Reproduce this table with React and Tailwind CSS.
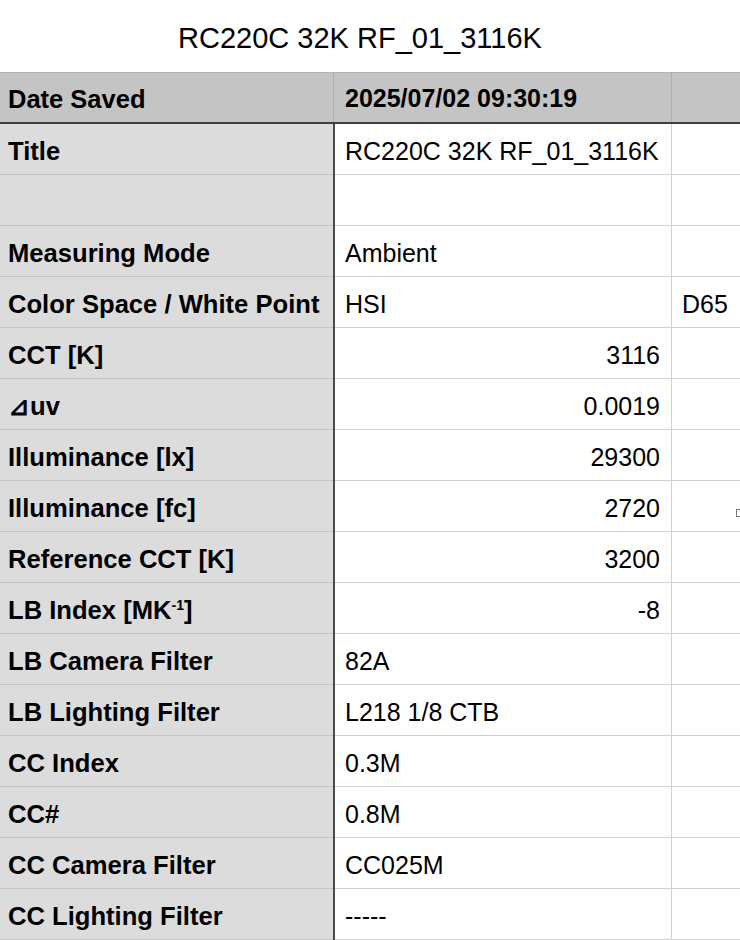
const rows = [
  { label: "Title", value: "RC220C 32K RF_01_3116K" },
  { label: "", value: "" },
  { label: "Measuring Mode", value: "Ambient" },
  { label: "Color Space / White Point", value: "HSI", extra: "D65" },
  { label: "CCT [K]", value: "3116", right: true },
  { label: "⊿uv", value: "0.0019", right: true },
  { label: "Illuminance [lx]", value: "29300", right: true },
  { label: "Illuminance [fc]", value: "2720", right: true, mark: true },
  { label: "Reference CCT [K]", value: "3200", right: true },
  { label: "LB Index [MK-1]", value: "-8", right: true, sup: true },
  { label: "LB Camera Filter", value: "82A" },
  { label: "LB Lighting Filter", value: "L218 1/8 CTB" },
  { label: "CC Index", value: "0.3M" },
  { label: "CC#", value: "0.8M" },
  { label: "CC Camera Filter", value: "CC025M" },
  { label: "CC Lighting Filter", value: "-----" },
];

function Label({ row }) {
  if (row.sup) {
    return (
      <span>
        LB Index [MK<sup className="text-[14px] relative -top-[9px]">-1</sup>]
      </span>
    );
  }
  return <span>{row.label}</span>;
}

export default function App() {
  return (
    <div
      className="w-[740px] h-[940px] overflow-hidden bg-white text-black"
      style={{ fontFamily: '"Liberation Sans", Arial, sans-serif' }}
    >
      <div className="h-[72px] flex items-center justify-center text-[29px] pt-[6px] pr-[20px]">
        RC220C 32K RF_01_3116K
      </div>
      <div className="w-[760px]">
        <div className="flex h-[52px] bg-[#c3c4c3] border-t border-[#b4b4b4] border-b-2 border-b-[#3f3f3f] text-[25px] font-bold">
          <div className="w-[334px] border-r border-[#aeaeae] flex items-center pl-[8px] pt-[3px]">
            <span className="text-[25.5px]">Date Saved</span>
          </div>
          <div className="w-[338px] border-r border-[#aeaeae] flex items-center pl-[11px] pt-[3px]">
            2025/07/02 09:30:19
          </div>
          <div className="flex-1"></div>
        </div>
        {rows.map((row, i) => (
          <div key={i} className="flex h-[51px] text-[25px]">
            <div className="w-[333px] bg-[#dcdcdc] border-b border-[#c4c4c4] flex items-center pl-[8px] pt-[5px] font-bold text-[25.6px]">
              <Label row={row} />
            </div>
            <div className="w-[2px] bg-[#4a4a4a]"></div>
            <div
              className={
                "w-[337px] border-r border-b border-[#d2d2d2] flex items-center pt-[5px] " +
                (row.right ? "justify-end pr-[11px]" : "pl-[10px]")
              }
            >
              {row.value}
            </div>
            <div className="flex-1 border-b border-[#d2d2d2] flex items-center pl-[10px] pt-[5px] relative">
              {row.extra}
              {row.mark && (
                <span className="absolute left-[64px] top-[28px] w-[5px] h-[8px] border border-[#777]"></span>
              )}
            </div>
          </div>
        ))}
      </div>
    </div>
  );
}
